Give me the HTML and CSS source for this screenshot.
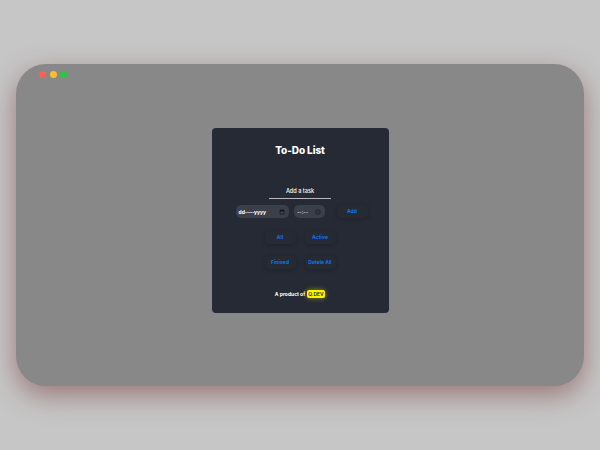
FILE: index.html
```html
<!DOCTYPE html>
<html lang="en">
<head>
<meta charset="utf-8">
<title>To-Do List</title>
<link rel="stylesheet" href="styles.css">
</head>
<body>
<main class="window">
  <div class="dots"><i class="dot red"></i><i class="dot yellow"></i><i class="dot green"></i></div>
  <section class="card">
    <h1 class="title">To-Do List</h1>
    <div class="task">Add a task</div>
    <div class="controls">
      <div class="field date"><span class="date-text">dd<span class="dashes">-----</span>yyyy</span>
        <svg class="icon" viewBox="0 0 6 6"><path d="M1 1.2h4v4H1z" fill="none" stroke="#10131a" stroke-width=".6"/><path d="M.8.8h4.4v1.5H.8z" fill="#10131a"/></svg>
      </div>
      <div class="field time"><span class="time-text">--:--</span>
        <svg class="icon" viewBox="0 0 6 6"><circle cx="3" cy="3" r="2.3" fill="none" stroke="#171a21" stroke-width=".7"/><path d="M3 1.5V3l1 .7" fill="none" stroke="#171a21" stroke-width=".6"/></svg>
      </div>
      <button class="btn add">Add</button>
    </div>
    <div class="filters">
      <button class="btn all">All</button><button class="btn active">Active</button>
      <button class="btn finished">Finised</button><button class="btn delete">Detele All</button>
    </div>
    <footer class="footer"><span class="product">A product of</span><span class="brand">Q.DEV</span></footer>
  </section>
</main>
</body>
</html>
```
FILE: styles.css
```css
* { box-sizing: border-box; }
body {
  margin: 0;
  height: 450px;
  padding: 64px 16px;
  overflow: hidden;
  background: #c6c6c6;
  font-family: Inter, "Open Sans", sans-serif;
}
.window {
  height: 322px;
  border-radius: 30px;
  background: #888;
  box-shadow: 0 9px 27px rgba(118, 55, 55, .54);
}
.dots { display: flex; height: 63.5px; padding: 7px 0 0 23px; }
.dot { width: 7px; height: 7px; border-radius: 50%; }
.red { background: #ff5f57; }
.yellow { margin-left: 4px; background: #febc2e; }
.green { margin-left: 3px; background: #28c840; }
.card {
  display: flex;
  flex-direction: column;
  align-items: center;
  width: 177px;
  height: 185px;
  margin: 0 auto;
  padding-top: 15px;
  border-radius: 4px;
  background: #262a35;
  color: #fff;
}
.title {
  margin: 0;
  font-size: 10px;
  line-height: 15px;
  font-weight: 800;
  letter-spacing: -.1px;
  white-space: nowrap;
}
.task {
  width: 62px;
  height: 14.5px;
  margin-top: 27px;
  border-bottom: 1px solid #b7b9bd;
  font-size: 5.6px;
  line-height: 12px;
  font-weight: 500;
  text-align: center;
}
.controls { display: flex; margin-top: 6px; align-self: stretch; padding-left: 24px; }
.field {
  display: flex;
  align-items: center;
  justify-content: space-between;
  height: 13px;
  border-radius: 5px;
  background: #3b3f49;
  font-size: 5px;
  font-weight: 700;
  white-space: nowrap;
}
.date { width: 53px; padding: 0 3.5px 0 3px; }
.dashes { letter-spacing: -.5px; }
.time { width: 31px; margin-left: 5.5px; padding: 0 4px 0 3px; }
.time-text { color: #d5d6d9; }
.icon { width: 6px; height: 6px; }
.btn {
  height: 13px;
  padding: 0;
  border: 0;
  border-radius: 5px;
  background: #262a33;
  box-shadow: 0 1px 4px rgba(12, 15, 21, .3);
  color: #0a76ee;
  font: 700 5px/13px Inter, sans-serif;
  letter-spacing: .08px;
  text-align: center;
  white-space: nowrap;
}
.add { width: 31px; margin-left: 11.5px; }
.delete { letter-spacing: 0; }
.filters {
  display: grid;
  grid-template-columns: 31px 31px;
  gap: 12px 9px;
  margin-top: 12.5px;
}
.footer {
  display: flex;
  align-items: center;
  height: 8px;
  margin-top: 21px;
  font-size: 5px;
  font-weight: 700;
}
.brand {
  height: 8px;
  margin-left: 1.5px;
  padding: 0 1.5px;
  border-radius: 2px;
  background: #fbf500;
  box-shadow: 0 0 5px rgba(251, 245, 0, .5);
  color: #262a35;
  font-weight: 600;
  line-height: 8px;
}
```
